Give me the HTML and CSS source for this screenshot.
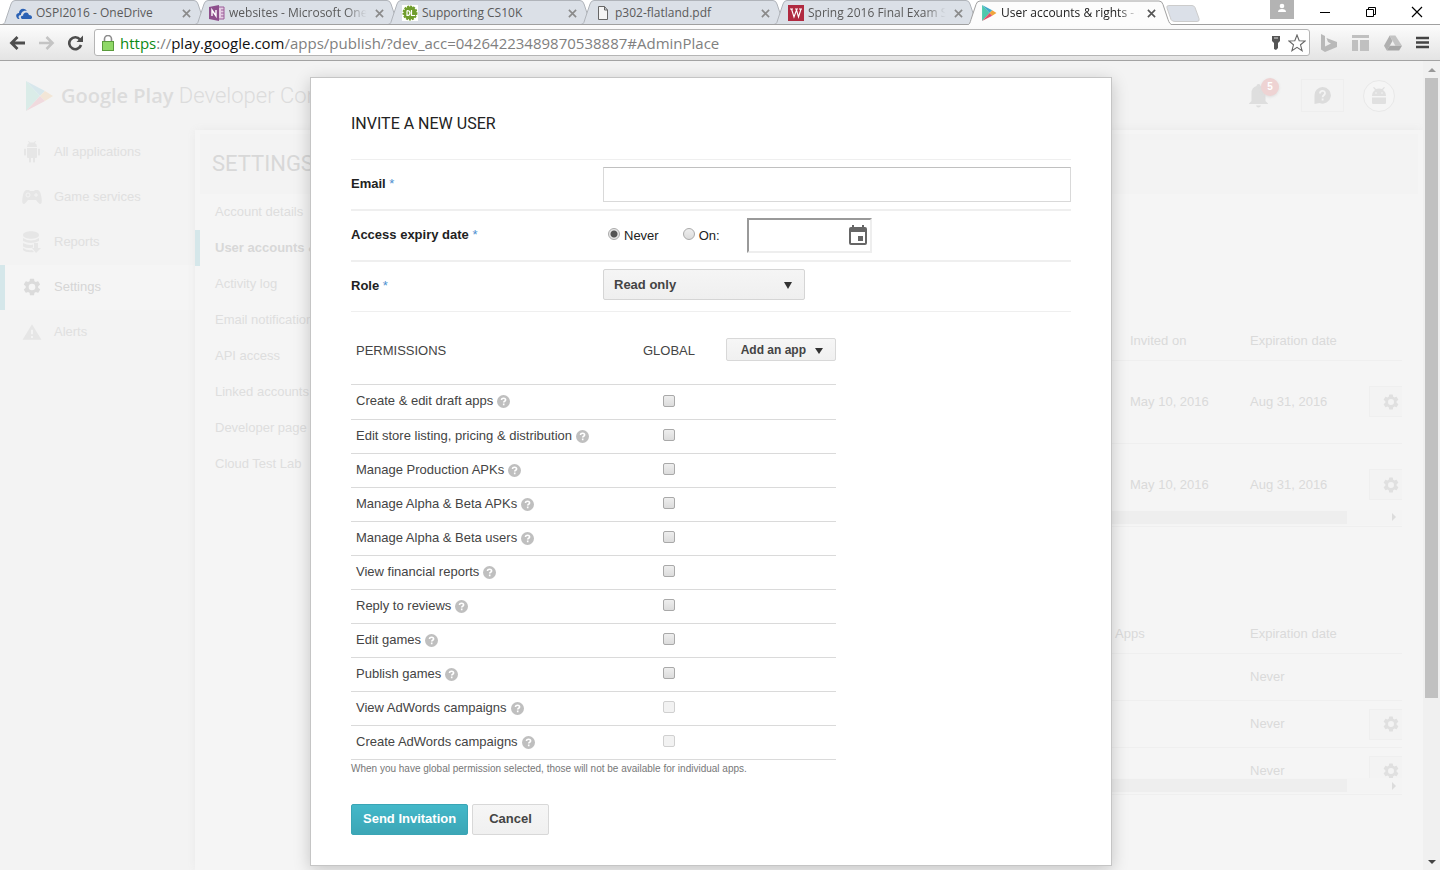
FILE: index.html
```html
<!DOCTYPE html>
<html lang="en">
<head>
<meta charset="utf-8">
<title>User accounts &amp; rights - Google Play Developer Console</title>
<link rel="stylesheet" href="styles.css">
</head>
<body>
<svg class="defs" aria-hidden="true">
  <symbol id="gear" viewBox="0 0 24 24"><path d="M19.4 13a7.5 7.5 0 0 0 0-2l2.1-1.6a.5.5 0 0 0 .1-.6l-2-3.5a.5.5 0 0 0-.6-.2l-2.5 1a7.3 7.3 0 0 0-1.7-1L14.5 2.400a.5.5 0 0 0-.5-.4h-4a.5.5 0 0 0-.5.4l-.4 2.700a7.700 7.700 0 0 0-1.700 1l-2.500-1a.5.5 0 0 0-.6.200l-2 3.500a.5.5 0 0 0 .1.600L4.500 11a7.500 7.500 0 0 0 0 2l-2.100 1.600a.5.5 0 0 0-.1.600l2 3.500c.1.200.4.300.6.200l2.500-1c.5.400 1.100.700 1.700 1l.4 2.700c0 .2.200.4.500.4h4c.3 0 .5-.2.500-.4l.4-2.700c.6-.3 1.200-.6 1.700-1l2.500 1c.2.100.5 0 .6-.2l2-3.500a.5.5 0 0 0-.1-.6zM12 16a4 4 0 1 1 0-8 4 4 0 0 1 0 8z"/></symbol>
  <symbol id="help" viewBox="0 0 13 13"><circle cx="6.500" cy="6.500" r="6.500" fill="#bfbfbf"/><path d="M4.500 5.100c0-1.200.9-1.900 2.100-1.900s2 .7 2 1.700c0 1.400-1.900 1.300-1.900 2.600M6.700 8.600v1.600" fill="none" stroke="#fff" stroke-width="1.600"/></symbol>
  <symbol id="close" viewBox="0 0 10 10"><path d="M1 1l8 8M9 1l-8 8" fill="none" stroke="currentColor" stroke-width="1.800"/></symbol>
  <symbol id="tab" viewBox="0 0 206 24"><path d="M0 24.500C3 24 3 22 4 19L9 4Q10 .5 13 .5H192Q195 .5 196 4L201 19C202 22 203 24 206 24.500"/></symbol>
  <symbol id="play" viewBox="0 0 28 30"><path d="M1 0v30l14-15z" fill="#4fc8ae"/><path d="M1 0l14 15 5-5z" fill="#3fa9c9"/><path d="M20 10l8 5-8 5-5-5z" fill="#f0a43c"/><path d="M1 30l14-15 5 5z" fill="#e0506a"/></symbol>
</svg>

<header class="browser">
  <div class="strip">
    <div class="tab">
      <svg class="shape"><use href="#tab"/></svg>
      <svg class="fav" viewBox="0 0 16 16"><path d="M1 13c-2-3 0-5 2-5 0-4 5-6 8-2-4-1-6 2-6 4-3 0-3 3-1 4H2z" fill="#2b62b5"/><path d="M6 14c-2-1-1-4 1-3 0-4 5-5 6-1 3 0 4 3 2 4z" fill="#2b62b5"/></svg>
      <span class="name">OSPI2016 - OneDrive</span><button class="x" aria-label="Close tab"><svg><use href="#close"/></svg></button>
    </div>
    <div class="tab">
      <svg class="shape"><use href="#tab"/></svg>
      <svg class="fav" viewBox="0 0 16 16"><path d="M9 2h6v12H9z" fill="#e4cde3" stroke="#9b5a98"/><path d="M12 5h3M12 8h3M12 11h3" stroke="#9b5a98"/><path d="M0 2l10-2v16L0 14z" fill="#8d4f8c"/><path d="M3 11V5l4 6V5" fill="none" stroke="#fff" stroke-width="1.400"/></svg>
      <span class="name fade">websites - Microsoft OneNote</span><button class="x" aria-label="Close tab"><svg><use href="#close"/></svg></button>
    </div>
    <div class="tab">
      <svg class="shape"><use href="#tab"/></svg>
      <svg class="fav" viewBox="0 0 16 16"><path d="M0 0h16v16H0z" fill="#fff"/><circle cx="8" cy="8" r="6.500" fill="#6f9d2c" stroke="#6f9d2c" stroke-width="2" stroke-dasharray="2 1"/><path d="M5 5.500v5c4 0 4-5 0-5M9.500 5v5.500H13" fill="none" stroke="#fff" stroke-width="1.200"/></svg>
      <span class="name">Supporting CS10K</span><button class="x" aria-label="Close tab"><svg><use href="#close"/></svg></button>
    </div>
    <div class="tab">
      <svg class="shape"><use href="#tab"/></svg>
      <svg class="fav" viewBox="0 0 16 16"><path d="M3.500 1.500h6l3 3.500v9.500h-9zM9.500 1.500V5h3" fill="#f4f4f4" stroke="#666"/></svg>
      <span class="name">p302-flatland.pdf</span><button class="x" aria-label="Close tab"><svg><use href="#close"/></svg></button>
    </div>
    <div class="tab">
      <svg class="shape"><use href="#tab"/></svg>
      <svg class="fav" viewBox="0 0 16 16"><path d="M0 0h16v16H0z" fill="#b02a40"/><path d="M2 4h3M7 4h3M11 4h3M3.500 4l2.500 8 2.500-7 2 7 2.500-8" fill="none" stroke="#fff" stroke-width="1.100"/></svg>
      <span class="name fade">Spring 2016 Final Exam Schedule</span><button class="x" aria-label="Close tab"><svg><use href="#close"/></svg></button>
    </div>
    <div class="tab active">
      <svg class="shape"><use href="#tab"/></svg>
      <svg class="fav"><use href="#play"/></svg>
      <span class="name fade">User accounts &amp; rights - Google</span><button class="x" aria-label="Close tab"><svg><use href="#close"/></svg></button>
    </div>
    <button class="newtab" aria-label="New tab"><svg viewBox="0 0 34 17"><path d="M3 .5h23q2 0 3 2l4 11q1 3-2 3H9q-3 0-4-2L1 3Q0 .5 3 .5z" fill="#dbe0e8" stroke="#ccc"/></svg></button>
    <div class="win">
      <button class="person" aria-label="Profile"><svg viewBox="0 0 24 19"><circle cx="12" cy="6" r="2.300" fill="#fff"/><path d="M8 12q0-3 4-3t4 3z" fill="#fff"/></svg></button>
      <button aria-label="Minimize"><svg viewBox="0 0 12 12"><path d="M1 6.500h10" stroke="#000"/></svg></button>
      <button aria-label="Restore"><svg viewBox="0 0 12 12"><path d="M1.500 3.500h7v7h-7zM3.500 3V1.500h7v7H9" fill="none" stroke="#000"/></svg></button>
      <button aria-label="Close window"><svg viewBox="0 0 12 12"><path d="M1 1l10 10M11 1L1 11" stroke="#000" stroke-width="1.200"/></svg></button>
    </div>
  </div>
  <div class="toolbar">
    <button aria-label="Back"><svg viewBox="0 0 17 16"><path d="M16 8H3M8.500 2L2.500 8l6 6" fill="none" stroke="#4d4d4d" stroke-width="2.800"/></svg></button>
    <button aria-label="Forward"><svg viewBox="0 0 17 16"><path d="M1 8h13M8.500 2l6 6-6 6" fill="none" stroke="#c4c4c4" stroke-width="2.600"/></svg></button>
    <button aria-label="Reload"><svg viewBox="0 0 17 16"><path d="M13 4.500A6 6 0 1 0 14 10" fill="none" stroke="#4d4d4d" stroke-width="2.600"/><path d="M9.500 7H16V.500z" fill="#4d4d4d"/></svg></button>
    <div class="omni">
      <svg class="lock" viewBox="0 0 12 16"><path d="M2.500 8V4a3.500 3.500 0 0 1 7 0v4" fill="none" stroke="#8c8c8c" stroke-width="1.600"/><rect x=".5" y="6.500" width="11" height="9" fill="#8fd867" stroke="#5a9b3c"/></svg>
      <div class="url"><span class="secure">https</span>://<b>play.google.com</b>/apps/publish/?dev_acc=04264223489870538887#AdminPlace</div>
      <svg class="key" viewBox="0 0 10 14"><path d="M1 0h8v5L7 7v5l-2 2-2-1V7L1 5z" fill="#555"/><path d="M3 2h4" stroke="#ddd"/></svg>
      <svg class="star" viewBox="0 0 18 18"><path d="M9 1l2.200 5.700 6 .3-4.700 3.800 1.600 5.900L9 13.400l-5.100 3.300 1.600-5.900L.800 7l6-.3z" fill="#fff" stroke="#666" stroke-width="1.100"/></svg>
    </div>
    <button class="ext" aria-label="Bing"><svg viewBox="0 0 18 18"><path d="M1 0l4 2v10.500l6-3-3-1.500-1.500-4L17 8v5L5 18l-4-2.500z" fill="#b9b9b9"/></svg></button>
    <button class="ext" aria-label="Tiles"><svg viewBox="0 0 18 18"><path d="M0 1h17v3H0zM0 6h6v11H0zM8 6h9v11H8z" fill="#c0c0c0"/></svg></button>
    <button class="ext" aria-label="Drive"><svg viewBox="0 0 19 18"><path d="M6 1h6l7 11H12z" fill="#c4c4c4"/><path d="M6 1L0 12l3 5 6-10z" fill="#b0b0b0"/><path d="M6 12h13l-3 5H3z" fill="#a6a6a6"/></svg></button>
    <button class="ext" aria-label="Menu"><svg viewBox="0 0 13 13"><path d="M0 2h13M0 6.500h13M0 11h13" stroke="#444" stroke-width="2.600"/></svg></button>
  </div>
</header>

<div class="viewport">
  <div class="page">
    <div class="console">
      <header class="top">
        <svg class="logo"><use href="#play"/></svg>
        <div class="brand"><b>Google Play</b> Developer Console</div>
        <button class="bell" aria-label="Notifications"><svg viewBox="0 0 19 24"><path d="M9.500 0q2 0 2 2 5 1.500 5 7v8l2.500 2.500V20H0v-.5L2.500 17V9q0-5.500 5-7 0-2 2-2zM7 21.500h5q-.5 2-2.500 2t-2.500-2z"/></svg><span class="badge">5</span></button>
        <button class="ask" aria-label="Help"><svg viewBox="0 0 17 17"><path d="M8.500 0a8.300 8.300 0 1 1-3 16L.500 17V8.500A8.200 8.200 0 0 1 8.500 0z"/><path d="M6 6.500C6 3 11 3 11 6.200c0 2-2.400 2-2.400 4M8.600 11.500v2" fill="none" stroke="#f3f3f3" stroke-width="1.800"/></svg></button>
        <button class="avatar" aria-label="Account"><svg viewBox="0 0 16 18"><path d="M1 9q0-4 3-6L2 .500 3 0l2 2q3-1 6 0l2-2 1 .500L12 3q3 2 3 6zM1 10.500h14V16q0 1-1 1H2q-1 0-1-1z"/><circle cx="5" cy="6" r=".8" fill="#f3f3f3"/><circle cx="11" cy="6" r=".8" fill="#f3f3f3"/></svg></button>
      </header>
      <div class="middle">
        <nav class="side">
          <a href="#"><svg viewBox="0 0 18 22"><path d="M4 6q0-3 2-4L5 0h1l1 1.500h4L12 0h1l-1 2q2 1 2 4zM4 7h10v9q0 1-1 1h-1v4q-1 1-2 0v-4H8v4q-1 1-2 0v-4H5q-1 0-1-1zM1 8q1-1 2 0v6q-1 1-2 0zM15 8q1-1 2 0v6q-1 1-2 0z"/></svg>All applications</a>
          <a href="#"><svg viewBox="0 0 20 14"><path d="M5 0h2l1 1h4l1-1h2q3 0 4 5 2 9-1 9-1 0-4-4H6q-3 4-4 4-3 0-1-9 1-5 4-5z"/><circle cx="6" cy="5" r="2" fill="none" stroke="#f3f3f3"/><path d="M14 3v4M12 5h4" stroke="#f3f3f3"/></svg>Game services</a>
          <a href="#"><svg viewBox="0 0 18 22"><path d="M0 4c0-5 16-5 16 0s-16 5-16 0zM0 7q8 5 16 0v3q-8 4-16 0zM0 12q6 3 10 1.500v3Q4 18 0 15.500zM0 17q5 3 9 2l2 2q-8 1-11-2zM11 12h4v5h3l-5 5-4-5h2z"/></svg>Reports</a>
          <a href="#" class="on"><svg><use href="#gear"/></svg>Settings</a>
          <a href="#"><svg viewBox="0 0 18 16"><path d="M9 1l8.500 14H.500z"/><path d="M9 6v4M9 11.500v2" stroke="#f3f3f3" stroke-width="1.800"/></svg>Alerts</a>
        </nav>
        <main class="panel">
          <h1>SETTINGS</h1>
          <div class="cols">
            <nav class="sub">
              <a href="#">Account details</a>
              <a href="#" class="on">User accounts &amp; rights</a>
              <a href="#">Activity log</a>
              <a href="#">Email notifications</a>
              <a href="#">API access</a>
              <a href="#">Linked accounts</a>
              <a href="#">Developer page</a>
              <a href="#">Cloud Test Lab</a>
            </nav>
            <div class="lists">
              <div class="scroller">
                <table>
                  <thead><tr><th></th><th class="c2">Invited on</th><th class="c3">Expiration date</th><th class="c4"></th></tr></thead>
                  <tbody class="tall">
                    <tr><td></td><td>May 10, 2016</td><td>Aug 31, 2016</td><td><button class="cog" aria-label="Options"><svg><use href="#gear"/></svg></button></td></tr>
                    <tr><td></td><td>May 10, 2016</td><td>Aug 31, 2016</td><td><button class="cog" aria-label="Options"><svg><use href="#gear"/></svg></button></td></tr>
                  </tbody>
                </table>
                <div class="hbar"><i></i></div>
              </div>
              <div class="scroller">
                <table>
                  <thead><tr><th></th><th class="apps">Apps</th><th class="c3">Expiration date</th><th class="c4"></th></tr></thead>
                  <tbody>
                    <tr><td></td><td></td><td>Never</td><td></td></tr>
                    <tr><td></td><td></td><td>Never</td><td><button class="cog" aria-label="Options"><svg><use href="#gear"/></svg></button></td></tr>
                    <tr><td></td><td></td><td>Never</td><td><button class="cog" aria-label="Options"><svg><use href="#gear"/></svg></button></td></tr>
                  </tbody>
                </table>
                <div class="hbar"><i></i></div>
              </div>
            </div>
          </div>
        </main>
      </div>
    </div>

    <form class="dialog" role="dialog" aria-labelledby="dlg-title">
      <h2 id="dlg-title">INVITE A NEW USER</h2>
      <div class="row">
        <label class="lab" for="email">Email <span>*</span></label>
        <input class="email" id="email" type="email">
      </div>
      <div class="row">
        <label class="lab" for="expiry">Access expiry date <span>*</span></label>
        <div class="expiry">
          <input type="radio" name="exp" id="never" checked><label for="never">Never</label>
          <input type="radio" name="exp" id="on"><label for="on">On:</label>
          <div class="date"><input id="expiry" type="text"><svg viewBox="0 0 18 20"><path d="M3 0h2v2h8V0h2v2h1q2 0 2 2v14q0 2-2 2H2q-2 0-2-2V4q0-2 2-2h1zM2 7v11h14V7zM9 11h5v5H9z" fill-rule="evenodd"/></svg></div>
        </div>
      </div>
      <div class="row">
        <label class="lab" for="role">Role <span>*</span></label>
        <div class="pick"><select id="role"><option>Read only</option></select><i class="caret"></i></div>
      </div>

      <table class="perms">
        <thead><tr><th>PERMISSIONS</th><th class="global">GLOBAL</th><th class="add"><button type="button" class="btn small">Add an app<i class="caret"></i></button></th></tr></thead>
        <tbody>
          <tr><td><label for="p1">Create &amp; edit draft apps</label><svg><use href="#help"/></svg></td><td class="global"><input type="checkbox" id="p1"></td><td></td></tr>
          <tr><td><label for="p2">Edit store listing, pricing &amp; distribution</label><svg><use href="#help"/></svg></td><td class="global"><input type="checkbox" id="p2"></td><td></td></tr>
          <tr><td><label for="p3">Manage Production APKs</label><svg><use href="#help"/></svg></td><td class="global"><input type="checkbox" id="p3"></td><td></td></tr>
          <tr><td><label for="p4">Manage Alpha &amp; Beta APKs</label><svg><use href="#help"/></svg></td><td class="global"><input type="checkbox" id="p4"></td><td></td></tr>
          <tr><td><label for="p5">Manage Alpha &amp; Beta users</label><svg><use href="#help"/></svg></td><td class="global"><input type="checkbox" id="p5"></td><td></td></tr>
          <tr><td><label for="p6">View financial reports</label><svg><use href="#help"/></svg></td><td class="global"><input type="checkbox" id="p6"></td><td></td></tr>
          <tr><td><label for="p7">Reply to reviews</label><svg><use href="#help"/></svg></td><td class="global"><input type="checkbox" id="p7"></td><td></td></tr>
          <tr><td><label for="p8">Edit games</label><svg><use href="#help"/></svg></td><td class="global"><input type="checkbox" id="p8"></td><td></td></tr>
          <tr><td><label for="p9">Publish games</label><svg><use href="#help"/></svg></td><td class="global"><input type="checkbox" id="p9"></td><td></td></tr>
          <tr><td><label for="p10">View AdWords campaigns</label><svg><use href="#help"/></svg></td><td class="global"><input type="checkbox" id="p10" disabled></td><td></td></tr>
          <tr><td><label for="p11">Create AdWords campaigns</label><svg><use href="#help"/></svg></td><td class="global"><input type="checkbox" id="p11" disabled></td><td></td></tr>
        </tbody>
      </table>
      <p class="note">When you have global permission selected, those will not be available for individual apps.</p>
      <div class="actions">
        <button type="button" class="btn primary">Send Invitation</button>
        <button type="button" class="btn">Cancel</button>
      </div>
    </form>
  </div>
  <div class="scrollbar"><i class="up"></i><div class="track"><div class="thumb"></div></div><i class="down"></i></div>
</div>
</body>
</html>
```
FILE: styles.css
```css
* { box-sizing: border-box; }
body {
  margin: 0;
  height: 100vh;
  display: flex;
  flex-direction: column;
  overflow: hidden;
  background: #f3f3f3;
  color: #222;
  font: 13px/18px "Liberation Sans", Arial, sans-serif;
}
button { margin: 0; padding: 0; border: 0; background: none; font: inherit; color: inherit; }
a { color: inherit; text-decoration: none; }
table { border-collapse: collapse; border-spacing: 0; }
th { font-weight: normal; text-align: left; }
th, td { padding: 0; }
.defs { position: absolute; width: 0; height: 0; }

/* Browser frame */
.browser { flex: none; font-family: "Open Sans", "Noto Sans", sans-serif; }
.strip { display: flex; height: 25px; padding-left: 2px; background: #fff; border-bottom: 1px solid #a0a0a0; }
.tab {
  position: relative;
  flex: 0 1 193px;
  min-width: 0;
  display: flex;
  align-items: center;
  height: 25px;
  padding: 1px 3px 0 14px;
  font-size: 12px;
  color: #5a5a5a;
}
.tab .shape { position: absolute; left: 0; top: 0; width: 206px; height: 24px; fill: #dbe0e7; stroke: #b0b4ba; }
.tab.active { color: #222; z-index: 1; }
.tab.active .shape { fill: #fcfcfc; stroke: #a0a0a0; height: 25px; }
.fav { position: relative; flex: none; width: 16px; height: 16px; margin-right: 4px; }
.name { position: relative; flex: 1; min-width: 0; overflow: hidden; white-space: nowrap; margin-right: 7px; }
.fade { -webkit-mask-image: linear-gradient(90deg, #000 84%, transparent 99%); mask-image: linear-gradient(90deg, #000 84%, transparent 99%); }
.x { position: relative; flex: none; width: 10px; height: 10px; color: #8a8a8a; }
.active .x { color: #555; }
.x svg { display: block; width: 9px; height: 9px; }
.newtab { flex: none; margin: 5px 0 0 6px; width: 34px; height: 17px; }
.newtab svg { display: block; width: 34px; height: 17px; }
.win { flex: none; margin-left: auto; display: flex; }
.win button { width: 46px; height: 24px; display: grid; place-items: center; }
.win button svg { width: 12px; height: 12px; }
.win .person { width: 24px; height: 19px; margin-right: 8px; background: #b3b3b3; }
.win .person svg { width: 24px; height: 19px; }
.toolbar { display: flex; align-items: center; height: 36px; padding: 0 10px 0 9px; background: linear-gradient(#fcfcfc, #e4e4e4); border-bottom: 1px solid #a3a3a3; }
.toolbar button { flex: none; width: 17px; height: 16px; margin-right: 12px; }
.toolbar button svg { display: block; width: 17px; height: 16px; }
.omni { flex: 1; min-width: 0; display: flex; align-items: center; height: 27px; padding: 0 3px 0 7px; margin: 0 10px 0 -2px; background: #fff; border: 1px solid #b5b5b5; border-radius: 3px; }
.lock { flex: none; width: 12px; height: 16px; margin-right: 6px; }
.url { flex: 1; min-width: 0; overflow: hidden; white-space: nowrap; font-size: 15px; line-height: 22px; color: #808080; }
.url b { font-weight: normal; color: #111; }
.secure { color: #0b8a14; }
.key { width: 10px; height: 14px; margin-right: 7px; }
.star { width: 18px; height: 18px; }
.toolbar .ext { width: 18px; height: 18px; margin-right: 14px; }
.toolbar .ext svg { width: 18px; height: 18px; }
.toolbar .ext:last-child { width: 14px; height: 14px; margin-right: 0; }
.toolbar .ext:last-child svg { width: 13px; height: 13px; }

/* Console page */
.viewport { flex: 1; min-height: 0; display: flex; }
.page { position: relative; flex: 1; min-width: 0; overflow: hidden; }
.console { height: 100%; display: flex; flex-direction: column; color: #dedede; fill: #e4e4e4; }
.top { display: flex; align-items: center; height: 69px; padding: 0 28px 0 25px; }
.logo { width: 28px; height: 30px; margin-right: 8px; opacity: .15; }
.brand { flex: 1; font: 300 22px/30px Roboto, sans-serif; white-space: nowrap; color: #dcdcdc; }
.brand b { font: 600 20px/30px "Open Sans", sans-serif; }
.top button { flex: none; position: relative; }
.top svg { display: block; }
.bell { width: 19px; height: 24px; margin-right: 33px; fill: #dedede; }
.badge { position: absolute; left: 12px; top: -6px; width: 18px; height: 18px; border-radius: 50%; background: #eed3d3; color: #fff; font: bold 10px/18px "Liberation Sans", sans-serif; text-align: center; box-shadow: 0 1px 3px #ddd; }
.top .ask { display: grid; place-items: center; width: 43px; height: 33px; margin-right: 19px; border: 1px solid #eee; fill: #dcdcdc; }
.ask svg { width: 17px; height: 17px; }
.top .avatar { display: grid; place-items: center; width: 32px; height: 32px; border: 1px solid #e8e8e8; border-radius: 50%; background: #f5f5f5; fill: #e0e0e0; }
.avatar svg { width: 16px; height: 18px; }
.middle { flex: 1; min-height: 0; display: flex; }
.side { width: 195px; flex: none; }
.side a { display: flex; align-items: center; height: 45px; padding: 0 0 2px 22px; color: #e0e0e0; }
.side svg { width: 20px; height: 22px; margin-right: 12px; fill: #e6e6e6; }
.side a.on { border-left: 5px solid #d5e7ea; padding-left: 17px; background: #f5f5f5; color: #d6d6d6; }
.side a.on svg { fill: #dbdbdb; }
.panel { flex: 1; min-width: 0; padding: 4px 5px 0 0; background: #f5f5f5; box-shadow: 0 0 8px #eaeaea; }
.panel h1 { margin: 0 0 0 5px; padding-left: 12px; font: 400 22px/60px Roboto, sans-serif; background: #f3f3f3; color: #d8d8d8; }
.cols { display: flex; }
.sub { flex: none; width: 170px; }
.sub a { display: block; height: 36px; padding-left: 20px; line-height: 36px; white-space: nowrap; }
.sub a.on { border-left: 5px solid #d5e7ea; padding-left: 15px; font-weight: bold; color: #d8d8d8; }
.lists { flex: 1; min-width: 0; padding: 127px 16px 0 0; color: #dadada; }
.scroller { position: relative; margin-bottom: 88px; }
.scroller table { width: 100%; table-layout: fixed; }
.scroller th { height: 39px; padding-top: 1px; }
.scroller td { height: 47px; }
.scroller .tall td { height: 83px; }
.scroller tr { border-bottom: 1px solid #efefef; }
.c2 { width: 120px; }
.apps { width: 135px; }
.c3 { width: 119px; }
.c4 { width: 33px; }
.cog { display: flex; align-items: center; justify-content: center; padding-left: 10px; width: 33px; height: 31px; border: 1px solid #efefef; border-right: 0; background: #f3f3f3; }
.cog svg { width: 18px; height: 18px; fill: #e0e0e0; }
.hbar { position: absolute; left: 0; right: 0; bottom: 2px; height: 15px; display: flex; align-items: center; justify-content: flex-end; padding-right: 6px; background: #f4f4f4; }
.hbar::before { content: ""; flex: 1; height: 13px; margin-right: 45px; background: #eee; }
.hbar i { border: 4px solid transparent; border-left-color: #dcdcdc; border-right: 0; }

/* Page scrollbar */
.scrollbar { flex: none; width: 17px; display: flex; flex-direction: column; align-items: center; background: #f0f0f0; }
.track { flex: 1; width: 13px; }
.thumb { height: 80%; background: #c1c1c1; }
.up, .down { height: 17px; display: grid; place-items: center; }
.up::before, .down::before { content: ""; border: 4px solid transparent; }
.up::before { border-top: 0; border-bottom-color: #999; }
.down::before { border-bottom: 0; border-top-color: #444; }

/* Invite dialog */
.dialog {
  position: absolute;
  top: 16px;
  left: 0;
  right: 1px;
  width: 802px;
  max-width: 100%;
  margin: 0 auto;
  padding: 36px 40px 30px;
  background: #fff;
  border: 1px solid #c5c5c5;
  box-shadow: 0 4px 16px rgba(0, 0, 0, .2);
}
.dialog h2 { margin: 0 0 25px; font: 400 16px/20px Roboto, sans-serif; }
.row { display: flex; align-items: center; padding: 7px 0; min-height: 51px; border-top: 1px solid #efefef; border-bottom: 1px solid #efefef; }
.lab { flex: none; width: 252px; padding-bottom: 2px; font-weight: bold; }
.lab span { font-weight: normal; color: #4d90d0; }
.email { flex: 1; min-width: 0; height: 35px; padding: 0 8px; border: 1px solid #d9d9d9; border-top-color: #c0c0c0; }
.expiry { display: flex; align-items: center; }
.expiry label { margin: 0 24px 0 4px; }
.expiry input[type="radio"] { appearance: none; width: 12px; height: 12px; margin: 0 0 4px 5px; border: 1px solid #aaa; border-radius: 50%; background: linear-gradient(#eee, #dcdcdc); }
.expiry label + input[type="radio"] { margin-left: 0; }
.expiry input[type="radio"]:checked { background: radial-gradient(circle, #555 3px, #e6e6e6 4px); }
.date { position: relative; margin-left: 3px; }
.date input { display: block; width: 125px; height: 35px; padding: 0 26px 0 4px; border: 2px solid #eee; border-top-color: #999; border-left-color: #999; }
.date svg { position: absolute; right: 5px; top: 7px; width: 18px; height: 20px; fill: #666; }
.pick { position: relative; align-self: flex-start; }
.pick select { appearance: none; display: block; width: 202px; height: 31px; padding: 0 10px; border: 1px solid #d5d5d5; border-radius: 2px; background: linear-gradient(#f5f5f5, #efefef); font: bold 13px/18px "Liberation Sans", Arial, sans-serif; color: #444; }
.caret { display: inline-block; border: 4px solid transparent; border-top: 7px solid #333; border-bottom: 0; }
.pick .caret { position: absolute; right: 13px; top: 13px; }
.perms { width: 485px; table-layout: fixed; color: #444; }
.perms th { height: 72px; padding: 6px 5px 0; }
.perms td { height: 34px; padding: 0 5px 1px; }
.perms tbody tr:first-child td { height: 35px; }
.perms tr { border-bottom: 1px solid #dadada; }
.perms th.global, .perms td.global { width: 114px; padding-left: 0; padding-right: 0; text-align: center; }
.perms td.global { padding-bottom: 2px; }
.perms th.add { width: 110px; padding: 4px 0 0; }
.perms td svg { width: 13px; height: 13px; margin-left: 4px; vertical-align: -3px; }
.perms input { appearance: none; display: block; width: 12px; height: 12px; margin: 0 auto; border: 1px solid #a9a9a9; border-radius: 2px; background: linear-gradient(#eee, #dcdcdc); }
.perms input:disabled { border-color: #d0d0d0; background: #f2f2f2; }
.btn { height: 31px; padding: 0 16px; border: 1px solid #d8d8d8; border-radius: 2px; background: linear-gradient(#f6f6f6, #f0f0f0); font-weight: bold; color: #444; }
.btn.small { display: flex; align-items: center; justify-content: flex-end; width: 110px; height: 23px; padding: 0 12px 0 0; font-size: 12px; }
.btn.small .caret { margin: 3px 0 0 9px; border-top-width: 6px; }
.btn.primary { padding: 0 11px; border-color: #3aa5b5; background: linear-gradient(#43b8c9, #3ca6b6); color: #fff; }
.note { margin: 3px 0 29px; font-size: 10px; line-height: 12px; color: #777; }
.actions { display: flex; gap: 4px; }
```
